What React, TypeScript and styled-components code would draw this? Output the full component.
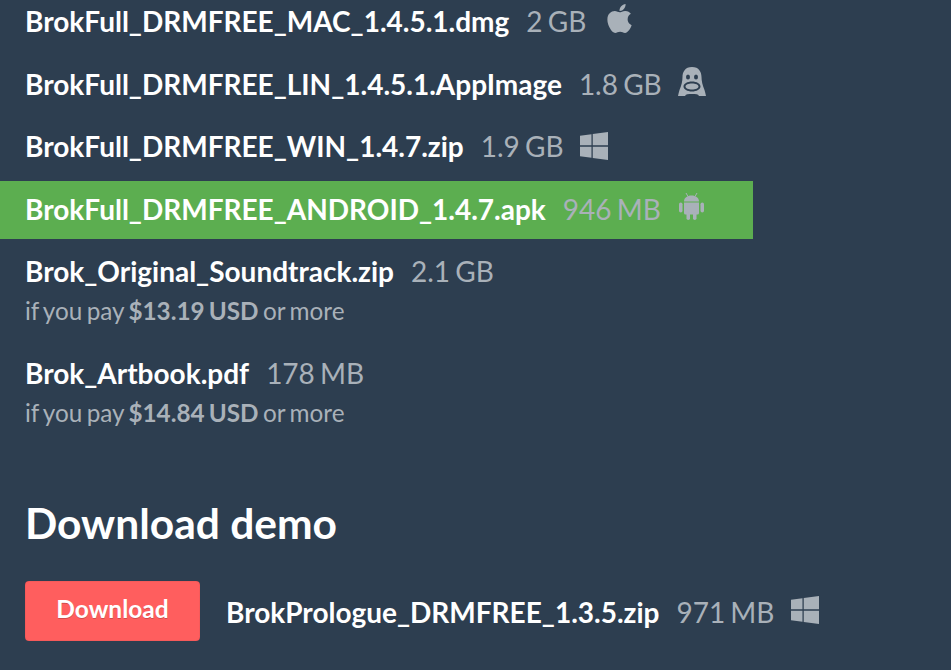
import React from "react";
import styled, { createGlobalStyle } from "styled-components";
import { FaApple, FaWindows } from "react-icons/fa";

const GlobalStyle = createGlobalStyle`
  html, body {
    margin: 0;
    padding: 0;
    background: #2d3e50;
    overflow: hidden;
  }
  body {
    font-family: Lato, "Liberation Sans", sans-serif;
  }
`;

const Page = styled.div`
  width: 951px;
  height: 670px;
  background: #2d3e50;
  overflow: hidden;
`;

const Uploads = styled.div`
  width: 753px;
  margin-top: -7px;
`;

const Row = styled.div<{ $active?: boolean; $priced?: boolean }>`
  padding: ${(p) => (p.$priced ? "7px 25px 15.3px" : "8px 25px 10px")};
  margin-bottom: 4.67px;
  background: ${(p) => (p.$active ? "#5cae50" : "transparent")};
`;

const FileLine = styled.div`
  display: flex;
  align-items: center;
  height: 40px;
`;

const FileName = styled.strong`
  color: #fff;
  font-size: 28px;
  font-weight: 700;
`;

const DemoFileName = styled(FileName)`
  margin-top: 2px;
`;

const FileSize = styled.span`
  color: #a9b1b9;
  font-size: 28px;
  font-weight: 400;
  word-spacing: -2px;
  margin-left: 17px;
`;

const DemoFileSize = styled(FileSize)`
  margin-top: 2px;
`;

const Icon = styled.span`
  display: inline-flex;
  color: #a9b1b9;
  margin-left: 16px;
  margin-top: -5px;
`;

const DemoIcon = styled(Icon)`
  margin-left: 17px;
`;

const AppleGlyph = styled(FaApple)`
  width: 25px;
  height: 33px;
  margin-left: 5px;
`;

const WindowsGlyph = styled(FaWindows)`
  width: 28px;
  height: 32px;
  margin-top: 4px;
`;

const AndroidSvg = styled.svg`
  margin-left: 2px;
`;

const Price = styled.div`
  color: #a9b1b9;
  font-size: 24.3px;
  word-spacing: -1.8px;
  line-height: 30px;
  margin-top: 5px;

  b {
    font-weight: 700;
  }
`;

const Heading = styled.h2`
  color: #fff;
  font-size: 42.5px;
  font-weight: 700;
  line-height: 50px;
  margin: 55px 0 33px 25px;
`;

const DemoRow = styled.div`
  display: flex;
  align-items: center;
  padding-left: 25px;
`;

const DownloadButton = styled.button`
  width: 175px;
  height: 60px;
  border: none;
  border-radius: 4px;
  background: #ff5e5e;
  box-shadow: inset 0 0 1px rgba(0, 0, 0, 0.35);
  color: #fff;
  font-family: inherit;
  font-size: 24.5px;
  font-weight: 700;
  margin-right: 26px;
  padding: 0 0 4px;
  text-shadow: 0 1px 0 rgba(0, 0, 0, 0.2);
`;

const LinuxIcon = () => (
  <svg width="28" height="29" viewBox="0 0 28 29" fill="currentColor">
    <path
      fillRule="evenodd"
      d="M14 0C7 0 4.500 5 4.500 10 4.500 14 3.500 18 1.500 23 .8 25 .5 27 0 29h7c1-2 3-2 7-2s6 0 7 2h7c-.5-2-.8-4-1.500-6-2-5-3-9-3-13C23.500 5 21 0 14 0zM10 7.500a2 2.500 0 1 1 0 5 2 2.500 0 0 1 0-5zm8 0a2 2.500 0 1 1 0 5 2 2.500 0 0 1 0-5zM14 14.500c4.700 0 8.500 2.200 8.500 5s-3.800 5-8.500 5-8.500-2.200-8.500-5 3.800-5 8.500-5zm0 2c-3.600 0-6.500 1.300-6.500 3s2.900 3 6.500 3 6.500-1.300 6.500-3-2.900-3-6.500-3z"
    />
  </svg>
);

const AndroidIcon = () => (
  <AndroidSvg width="25" height="28" viewBox="0 0 25 28" fill="currentColor">
    <path d="M5 9.500C5 6 8 3.500 12.500 3.500S20 6 20 9.500z" />
    <path d="M7 1l2 3.500M18 1l-2 3.500" stroke="currentColor" strokeWidth="1" fill="none" />
    <path d="M5 10.500h15V21a1.500 1.500 0 0 1-1.500 1.500H6.500A1.500 1.500 0 0 1 5 21z" />
    <rect x="0" y="10.500" width="3.500" height="10" rx="1.750" />
    <rect x="21.500" y="10.500" width="3.500" height="10" rx="1.750" />
    <rect x="7.500" y="20" width="3.500" height="8" rx="1.750" />
    <rect x="14" y="20" width="3.500" height="8" rx="1.750" />
  </AndroidSvg>
);

const files = [
  { name: "BrokFull_DRMFREE_MAC_1.4.5.1.dmg", size: "2 GB", icon: <AppleGlyph /> },
  { name: "BrokFull_DRMFREE_LIN_1.4.5.1.AppImage", size: "1.8 GB", icon: <LinuxIcon /> },
  { name: "BrokFull_DRMFREE_WIN_1.4.7.zip", size: "1.9 GB", icon: <WindowsGlyph /> },
  { name: "BrokFull_DRMFREE_ANDROID_1.4.7.apk", size: "946 MB", icon: <AndroidIcon />, active: true },
  { name: "Brok_Original_Soundtrack.zip", size: "2.1 GB", price: "$13.19 USD" },
  { name: "Brok_Artbook.pdf", size: "178 MB", price: "$14.84 USD" },
];

const App: React.FC = () => {
  return (
    <Page>
      <GlobalStyle />
      <Uploads>
        {files.map((file) => (
          <Row key={file.name} $active={file.active} $priced={!!file.price}>
            <FileLine>
              <FileName>{file.name}</FileName>
              <FileSize>{file.size}</FileSize>
              {file.icon && <Icon>{file.icon}</Icon>}
            </FileLine>
            {file.price && (
              <Price>
                if you pay <b>{file.price}</b> or more
              </Price>
            )}
          </Row>
        ))}
      </Uploads>
      <Heading>Download demo</Heading>
      <DemoRow>
        <DownloadButton>Download</DownloadButton>
        <DemoFileName>BrokPrologue_DRMFREE_1.3.5.zip</DemoFileName>
        <DemoFileSize>971 MB</DemoFileSize>
        <DemoIcon>
          <WindowsGlyph />
        </DemoIcon>
      </DemoRow>
    </Page>
  );
};

export default App;
